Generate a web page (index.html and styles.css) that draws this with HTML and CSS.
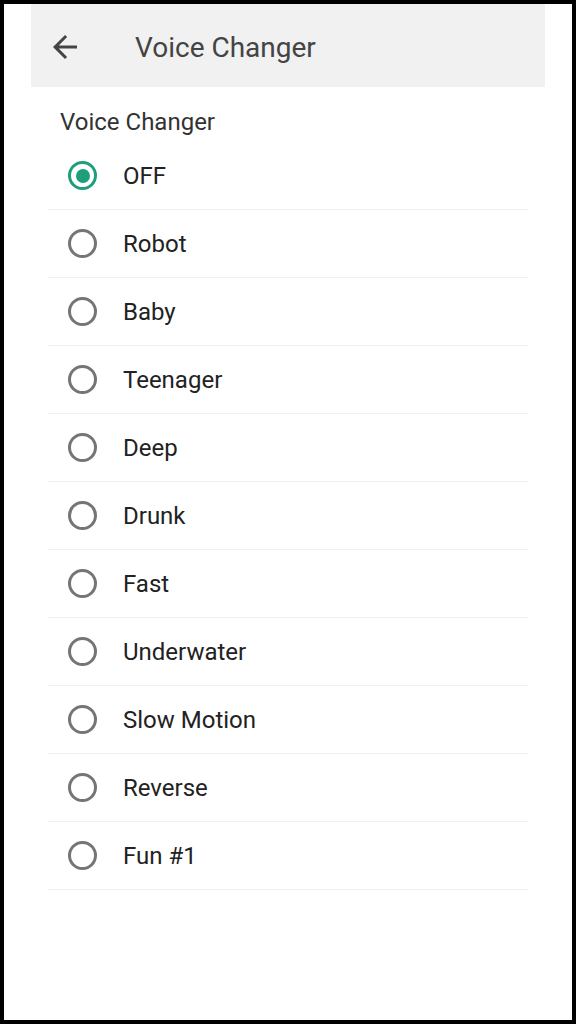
FILE: index.html
```html
<!DOCTYPE html>
<html>
<head>
<meta charset="utf-8">
<link rel="stylesheet" href="styles.css">
</head>
<body>
<div class="screen">
  <header class="appbar">
    <svg class="back" width="36" height="36" viewBox="0 0 24 24"><path d="M20 11H7.83l5.59-5.59L12 4l-8 8 8 8 1.41-1.41L7.83 13H20v-2z" fill="#444"/></svg>
    <h1 class="title">Voice Changer</h1>
  </header>
  <div class="section">Voice Changer</div>
  <ul class="list">
    <li class="row checked"><span class="radio"></span><span class="label">OFF</span></li>
    <li class="row"><span class="radio"></span><span class="label">Robot</span></li>
    <li class="row"><span class="radio"></span><span class="label">Baby</span></li>
    <li class="row"><span class="radio"></span><span class="label">Teenager</span></li>
    <li class="row"><span class="radio"></span><span class="label">Deep</span></li>
    <li class="row"><span class="radio"></span><span class="label">Drunk</span></li>
    <li class="row"><span class="radio"></span><span class="label">Fast</span></li>
    <li class="row"><span class="radio"></span><span class="label">Underwater</span></li>
    <li class="row"><span class="radio"></span><span class="label">Slow Motion</span></li>
    <li class="row"><span class="radio"></span><span class="label">Reverse</span></li>
    <li class="row"><span class="radio"></span><span class="label">Fun #1</span></li>
  </ul>
</div>
</body>
</html>
```
FILE: styles.css
```css
html, body {
  margin: 0;
  padding: 0;
  background: #000;
}
body {
  padding: 4px;
  font-family: Roboto, "Noto Sans", sans-serif;
}
.screen {
  width: 568px;
  height: 1016px;
  background: #fff;
  overflow: hidden;
}
.appbar {
  box-sizing: border-box;
  margin-left: 27px;
  width: 514px;
  height: 83px;
  padding-top: 3px;
  background: #f1f1f1;
  display: flex;
  align-items: center;
}
.back {
  margin-left: 16px;
  flex: none;
}
.title {
  margin: 0 0 0 52px;
  font-size: 28px;
  font-weight: 400;
  color: #444;
}
.section {
  margin: 21px 0 0 56px;
  font-size: 24px;
  color: #333;
  line-height: 28px;
}
.list {
  list-style: none;
  margin: 6px 0 0 44px;
  padding: 0;
  width: 480px;
}
.row {
  height: 67px;
  border-bottom: 1px solid #f0f0f0;
  display: flex;
  align-items: center;
}
.radio {
  box-sizing: border-box;
  width: 29px;
  height: 29px;
  border: 3px solid #757575;
  border-radius: 50%;
  margin-left: 20px;
  flex: none;
  display: flex;
  align-items: center;
  justify-content: center;
}
.checked .radio {
  border-color: #1f9e7c;
}
.checked .radio::after {
  content: "";
  width: 14px;
  height: 14px;
  border-radius: 50%;
  background: #1f9e7c;
}
.label {
  margin-left: 26px;
  font-size: 24px;
  color: #222;
}
```
